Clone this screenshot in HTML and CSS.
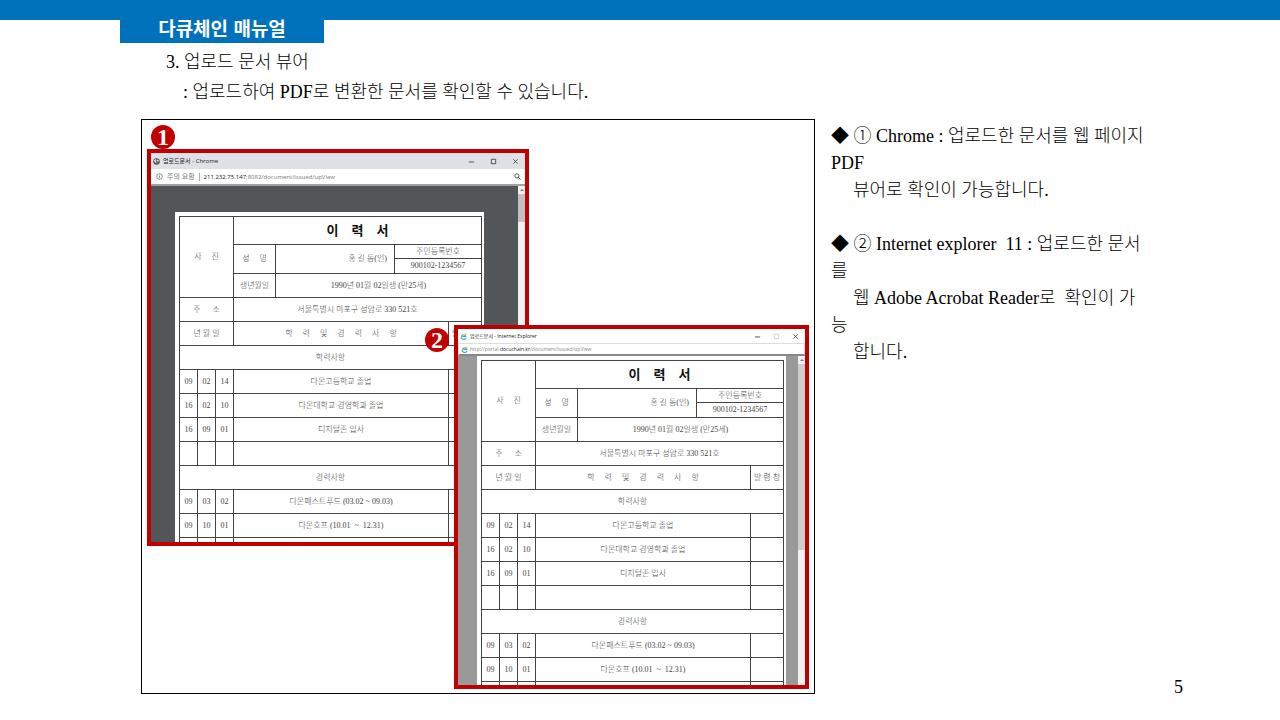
FILE: index.html
```html
<!DOCTYPE html>
<html lang="ko">
<head>
<meta charset="utf-8">
<title>다큐체인 매뉴얼</title>
<link rel="stylesheet" href="styles.css">
</head>
<body>
<div class="slide">
  <header class="band"><h1 class="tab">다큐체인 매뉴얼</h1></header>
  <section class="intro">
    <h2 class="intro-title">3. 업로드 문서 뷰어</h2>
    <p class="intro-text">: 업로드하여 PDF로 변환한 문서를 확인할 수 있습니다.</p>
  </section>
  <main class="content">
    <section class="frame">
      <article class="window chrome">
        <div class="titlebar">
          <svg class="icon" viewBox="0 0 16 16"><circle cx="8" cy="8" r="7.500" fill="#505357"/><path d="M3 4l4-1 1 2-2 2 2 2-1 3-3-3-2-2zM10 3l3 2v3l-2 1-2-3zM10 11l2 0-2 2z" fill="#dee1e6"/></svg>
          <span class="title">업로드문서 - Chrome</span>
          <button class="wbtn" aria-label="최소화"><svg viewBox="0 0 8 8"><path d="M1 4.500h6"/></svg></button>
          <button class="wbtn" aria-label="최대화"><svg viewBox="0 0 8 8"><path d="M1.500 1.500h5v5h-5z"/></svg></button>
          <button class="wbtn" aria-label="닫기"><svg viewBox="0 0 8 8"><path d="M1.500 1.500l5 5M6.500 1.500l-5 5"/></svg></button>
        </div>
        <div class="address">
          <svg class="icon" viewBox="0 0 16 16" fill="none" stroke="#5f6368" stroke-width="1.600"><circle cx="8" cy="8" r="6.500"/><path d="M8 7v5M8 4v1.800"/></svg>
          <span class="warn">주의 요함</span>
          <span class="url"><b>211.232.75.147</b>:8082/document/issued/upView</span>
          <button class="find" aria-label="확대/축소"><svg viewBox="0 0 8 8"><circle cx="3.300" cy="3.300" r="2.400"/><path d="M5 5l2.500 2.500"/></svg></button>
        </div>
        <div class="viewer">
          <div class="paper">
            <table class="resume">
              <colgroup><col class="c18"><col class="c18"><col class="c18"><col class="c42"><col class="c119"><col class="c54"><col class="c33"></colgroup>
              <tr class="r28"><td colspan="3" rowspan="4">사     진</td><th colspan="4">이    력    서</th></tr>
              <tr class="r14"><td rowspan="2">성     명</td><td rowspan="2" class="name">홍 길 동(인)</td><td colspan="2">주민등록번호</td></tr>
              <tr class="r15"><td colspan="2">900102-1234567</td></tr>
              <tr><td>생년월일</td><td colspan="3">1990년 01월 02일생 (만25세)</td></tr>
              <tr><td colspan="3">주      소</td><td colspan="4">서울특별시 마포구 성암로 330 521호</td></tr>
              <tr><td colspan="3">년 월 일</td><td colspan="3">학     력     및     경     력     사     항</td><td>발 령 청</td></tr>
              <tr><td colspan="7">학력사항</td></tr>
              <tr><td>09</td><td>02</td><td>14</td><td colspan="3">다몬고등학교 졸업</td><td></td></tr>
              <tr><td>16</td><td>02</td><td>10</td><td colspan="3">다몬대학교 경영학과 졸업</td><td></td></tr>
              <tr><td>16</td><td>09</td><td>01</td><td colspan="3">디지털존 입사</td><td></td></tr>
              <tr><td></td><td></td><td></td><td colspan="3"></td><td></td></tr>
              <tr><td colspan="7">경력사항</td></tr>
              <tr><td>09</td><td>03</td><td>02</td><td colspan="3">다몬패스트푸드 (03.02 ~ 09.03)</td><td></td></tr>
              <tr><td>09</td><td>10</td><td>01</td><td colspan="3">다몬호프 (10.01  ~  12.31)</td><td></td></tr>
              <tr><td></td><td></td><td></td><td colspan="3"></td><td></td></tr>
            </table>
          </div>
          <div class="scroll"><span class="arrow"></span><span class="thumb"></span></div>
        </div>
      </article>
      <article class="window ie">
        <div class="titlebar">
          <svg class="icon" viewBox="0 0 16 16" fill="none"><path d="M13.500 11A5.300 5.300 0 1 1 13.500 8H5" stroke="#36a6e4" stroke-width="2.600"/><path d="M2 14C-1 12 9 1 14 2c1 .5.500 2 0 3" stroke="#f0bd2c" stroke-width="2"/></svg>
          <span class="title">업로드문서 - Internet Explorer</span>
          <button class="wbtn" aria-label="최소화"><svg viewBox="0 0 8 8"><path d="M1 4.500h6"/></svg></button>
          <button class="wbtn" aria-label="최대화" disabled><svg viewBox="0 0 8 8"><path d="M1.500 1.500h5v5h-5z"/></svg></button>
          <button class="wbtn" aria-label="닫기"><svg viewBox="0 0 8 8"><path d="M1.500 1.500l5 5M6.500 1.500l-5 5"/></svg></button>
        </div>
        <div class="address">
          <svg class="icon" viewBox="0 0 16 16" fill="none"><path d="M13.500 11A5.300 5.300 0 1 1 13.500 8H5" stroke="#36a6e4" stroke-width="2.600"/><path d="M2 14C-1 12 9 1 14 2c1 .5.500 2 0 3" stroke="#f0bd2c" stroke-width="2"/></svg>
          <span class="url">http://portal.<b>docuchain.kr</b>/document/issued/upView</span>
        </div>
        <div class="viewer">
          <div class="paper">
            <table class="resume">
              <colgroup><col class="c18"><col class="c18"><col class="c18"><col class="c42"><col class="c119"><col class="c54"><col class="c33"></colgroup>
              <tr class="r28"><td colspan="3" rowspan="4">사     진</td><th colspan="4">이    력    서</th></tr>
              <tr class="r14"><td rowspan="2">성     명</td><td rowspan="2" class="name">홍 길 동(인)</td><td colspan="2">주민등록번호</td></tr>
              <tr class="r15"><td colspan="2">900102-1234567</td></tr>
              <tr><td>생년월일</td><td colspan="3">1990년 01월 02일생 (만25세)</td></tr>
              <tr><td colspan="3">주      소</td><td colspan="4">서울특별시 마포구 성암로 330 521호</td></tr>
              <tr><td colspan="3">년 월 일</td><td colspan="3">학     력     및     경     력     사     항</td><td>발 령 청</td></tr>
              <tr><td colspan="7">학력사항</td></tr>
              <tr><td>09</td><td>02</td><td>14</td><td colspan="3">다몬고등학교 졸업</td><td></td></tr>
              <tr><td>16</td><td>02</td><td>10</td><td colspan="3">다몬대학교 경영학과 졸업</td><td></td></tr>
              <tr><td>16</td><td>09</td><td>01</td><td colspan="3">디지털존 입사</td><td></td></tr>
              <tr><td></td><td></td><td></td><td colspan="3"></td><td></td></tr>
              <tr><td colspan="7">경력사항</td></tr>
              <tr><td>09</td><td>03</td><td>02</td><td colspan="3">다몬패스트푸드 (03.02 ~ 09.03)</td><td></td></tr>
              <tr><td>09</td><td>10</td><td>01</td><td colspan="3">다몬호프 (10.01  ~  12.31)</td><td></td></tr>
              <tr><td></td><td></td><td></td><td colspan="3"></td><td></td></tr>
            </table>
          </div>
          <div class="scroll"><span class="arrow"></span><span class="thumb"></span></div>
        </div>
      </article>
      <span class="badge one">1</span>
      <span class="badge two">2</span>
    </section>
    <aside class="side">
      <div class="notes">
        <p>◆ ① Chrome : 업로드한 문서를 웹 페이지<br>PDF<br><span class="indent">뷰어로 확인이 가능합니다.</span></p>
        <p>◆ ② Internet explorer  11 : 업로드한 문서<br>를<br><span class="indent">웹 Adobe Acrobat Reader로  확인이 가</span><br>능<br><span class="indent">합니다.</span></p>
      </div>
      <footer class="page-no">5</footer>
    </aside>
  </main>
</div>
</body>
</html>
```
FILE: styles.css
```css
* { box-sizing: border-box; }
body {
  margin: 0;
  background: #fff;
  color: #000;
  font: 300 18px/27px "Liberation Serif", "Noto Sans CJK KR", serif;
}
h1, h2, p { margin: 0; }
button { margin: 0; padding: 0; border: 0; background: none; }
.slide { min-height: 100vh; display: flex; flex-direction: column; }
.band {
  border-top: 12px solid #0072bc;
  padding-left: 120px;
  background: linear-gradient(#0072bc 8px, transparent 8px);
}
.tab {
  width: 204px;
  background: #0072bc;
  color: #fff;
  text-align: center;
  font: 700 19px/31px "Noto Sans CJK KR", sans-serif;
}
.intro { display: flex; flex-direction: column; padding: 4px 0 12px 166px; line-height: 30px; }
.intro-title { font-size: 18px; font-weight: 300; }
.intro-text { padding-left: 17px; }
.content { flex: 1; display: flex; gap: 16px; padding: 0 97px 26px 141px; }
.frame { position: relative; flex: 0 1 674px; min-height: 574px; border: 1px solid #000; }

.window {
  position: absolute;
  display: flex;
  flex-direction: column;
  border: 4px solid #c00000;
  background: #fff;
  overflow: hidden;
  font: 400 6px/10px "Open Sans", "Noto Sans CJK KR", sans-serif;
}
.chrome { left: 5px; top: 29px; width: 382px; height: 397px; }
.ie { left: 312px; top: 205px; width: 355px; height: 364px; font-size: 5px; }
.titlebar, .address { display: flex; align-items: center; padding-left: 2px; gap: 3px; flex: none; }
.chrome .titlebar { height: 16px; background: #dee1e6; color: #222; }
.ie .titlebar { height: 14px; color: #222; }
.chrome .address { height: 17px; padding-left: 5px; gap: 4px; border-bottom: 2px solid #a0a2a4; color: #777; }
.ie .address { height: 13px; gap: 2px; border: 1px solid #ddd; border-bottom: 2px solid #888; color: #888; }
.icon { width: 7px; height: 7px; flex: none; }
.title { flex: 1; }
.wbtn { width: 19px; height: 10px; display: flex; justify-content: center; align-items: center; }
.ie .wbtn { margin-left: -3px; }
.wbtn svg, .find svg { width: 7px; height: 7px; fill: none; stroke: #444; stroke-width: 1; }
.wbtn:disabled svg { stroke: #ccc; }
.warn { padding-right: 4px; border-right: 1px solid #aaa; font-size: 7px; line-height: 8px; }
.url { flex: 1; }
.url b { font-weight: 400; color: #222; }
.find { width: 10px; height: 10px; padding: 1px 2px; margin-right: 3px; }
.find svg { display: block; }

.viewer { flex: 1; min-height: 0; display: flex; justify-content: space-between; overflow: hidden; }
.chrome .viewer { background: #525659; padding: 26px 0 0 24px; }
.ie .viewer { background: #999; padding-left: 19px; }
.paper { width: 309px; background: #fff; padding: 4px; flex: none; align-self: flex-start; }
.scroll { width: 7px; background: #f1f1f1; display: flex; flex-direction: column; }
.chrome .scroll { margin-top: -26px; }
.arrow { height: 8px; display: flex; justify-content: center; align-items: center; }
.arrow::before { content: ""; border: 2px solid transparent; border-top: 0; border-bottom-color: #777; }
.thumb { background: #c1c1c1; }
.chrome .thumb { height: 28px; }
.ie .thumb { height: 186px; background: #cdcdcd; }

.resume {
  border-collapse: collapse;
  table-layout: fixed;
  width: 302px;
  color: #444;
  font: 300 8px/10px "Liberation Serif", "Noto Sans CJK KR", serif;
  white-space: pre;
}
.resume tr { height: 24px; }
.resume .r28 { height: 28px; }
.resume .r14 { height: 14px; }
.resume .r15 { height: 15px; }
.resume td, .resume th { border: 1px solid #444; padding: 0; text-align: center; }
.resume th { font-size: 13px; line-height: 16px; color: #111; }
.resume .name { text-align: right; padding-right: 7px; }
.c18 { width: 18px; }
.c42 { width: 42px; }
.c119 { width: 119px; }
.c54 { width: 54px; }
.c33 { width: 33px; }

.badge {
  position: absolute;
  width: 24px;
  height: 24px;
  border-radius: 50%;
  background: #c00000;
  color: #fff;
  text-align: center;
  font: 700 24px/24px "Liberation Serif", serif;
}
.one { left: 9px; top: 5px; }
.two { left: 283px; top: 208px; }

.side { flex: 1; display: flex; flex-direction: column; justify-content: space-between; }
.notes { display: flex; flex-direction: column; gap: 27px; padding-top: 4px; white-space: pre; }
.indent { padding-left: 22px; }
.page-no { text-align: right; line-height: 14px; }
```
